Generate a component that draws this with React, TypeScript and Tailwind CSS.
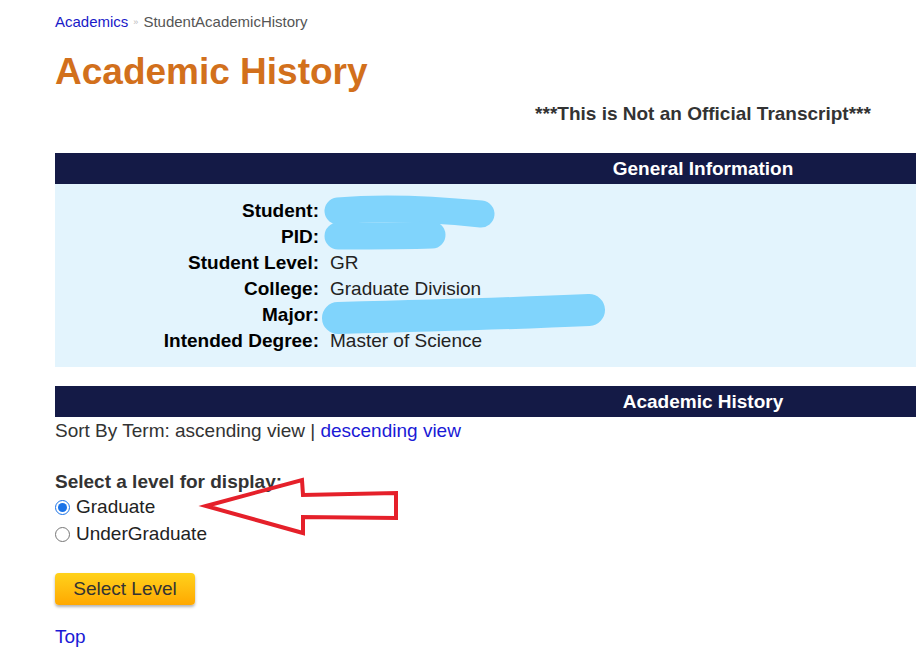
const info = [
  { label: "Student:", value: "" },
  { label: "PID:", value: "" },
  { label: "Student Level:", value: "GR" },
  { label: "College:", value: "Graduate Division" },
  { label: "Major:", value: "" },
  { label: "Intended Degree:", value: "Master of Science" },
];

const SectionBar = ({ title }: { title: string }) => (
  <div className="h-[31px] bg-[#141a46] text-white font-bold text-[19px] leading-[31px] text-center">
    {title}
  </div>
);

const App = () => {
  return (
    <div
      className="relative w-[916px] h-[658px] overflow-hidden bg-white text-[#333]"
      style={{ fontFamily: '"Liberation Sans", Arial, sans-serif' }}
    >
      <div className="w-[1296px] ml-[55px]">
        {/* == Breadcrumb == */}
        <div className="pt-[12px] text-[15px] leading-[20px] flex items-center">
          <a className="text-[#1a1ac8]" href="#">
            Academics
          </a>
          <span className="mx-[5px] text-[9px] text-[#bbb]">»</span>
          <span className="text-[#555]">StudentAcademicHistory</span>
        </div>

        <h1 className="mt-[18px] text-[37px] font-bold leading-[44px] text-[#d2701c]">
          Academic History
        </h1>

        <p className="mt-[8px] text-center font-bold text-[19px] leading-[24px] text-[#333]">
          ***This is Not an Official Transcript***
        </p>

        {/* == General Information == */}
        <div className="mt-[27px]">
          <SectionBar title="General Information" />
          <div className="bg-[#e3f4fd] pt-[14px] pb-[13px]">
            {info.map((row) => (
              <div className="flex h-[26px] items-center text-[19px]" key={row.label}>
                <div className="w-[264px] text-right font-bold text-black">{row.label}</div>
                <div className="pl-[11px] text-[#222]">{row.value}</div>
              </div>
            ))}
          </div>
        </div>

        {/* == Academic History == */}
        <div className="mt-[19px]">
          <SectionBar title="Academic History" />
          <div className="text-[19px] leading-[28px] text-[#333]">
            Sort By Term: ascending view |{" "}
            <a className="text-[#1a1ad6]" href="#">
              descending view
            </a>
          </div>
        </div>

        <div className="mt-[24px] text-[19px]">
          <div className="font-bold leading-[26px] text-[#333]">Select a level for display:</div>
          <label className="flex items-center h-[24px] text-[#222]">
            <input
              className="mr-[6px] w-[15px] h-[15px] m-0 accent-[#1a73e8]"
              type="radio"
              name="level"
              defaultChecked
            />
            Graduate
          </label>
          <label className="flex items-center h-[27px] mt-[2px] text-[#222]">
            <input
              className="mr-[6px] w-[15px] h-[15px] m-0"
              type="radio"
              name="level"
            />
            UnderGraduate
          </label>
        </div>

        <button className="mt-[25px] w-[140px] h-[32px] rounded-[4px] bg-gradient-to-b from-[#ffd21a] to-[#ffa800] text-[19px] text-[#333] shadow-[0_2px_3px_rgba(0,0,0,0.3)]">
          Select Level
        </button>

        <div className="mt-[19px] text-[19px] leading-[26px]">
          <a className="text-[#1a1ad6]" href="#">
            Top
          </a>
        </div>
      </div>

      {/* == redaction marks == */}
      <svg
        className="absolute left-0 top-0 pointer-events-none"
        width="916"
        height="658"
        viewBox="0 0 916 658"
      >
        <g stroke="#80d4fc" strokeLinecap="round" strokeLinejoin="round" fill="none">
          <path d="M338 211 C 380 207, 430 209, 481 214" strokeWidth="27" />
          <path d="M338 236 C 370 236, 405 236, 432 235" strokeWidth="27" />
          <path d="M338 318 C 420 316, 500 314, 589 310" strokeWidth="32" />
        </g>
        {/* == red arrow == */}
        <path
          d="M206 506 L302 480 L303 495 L396 493 L396 518 L303 517 L303 533 Z"
          fill="none"
          stroke="#e5202a"
          strokeWidth="4"
          strokeLinejoin="miter"
        />
      </svg>
    </div>
  );
};

export default App;
